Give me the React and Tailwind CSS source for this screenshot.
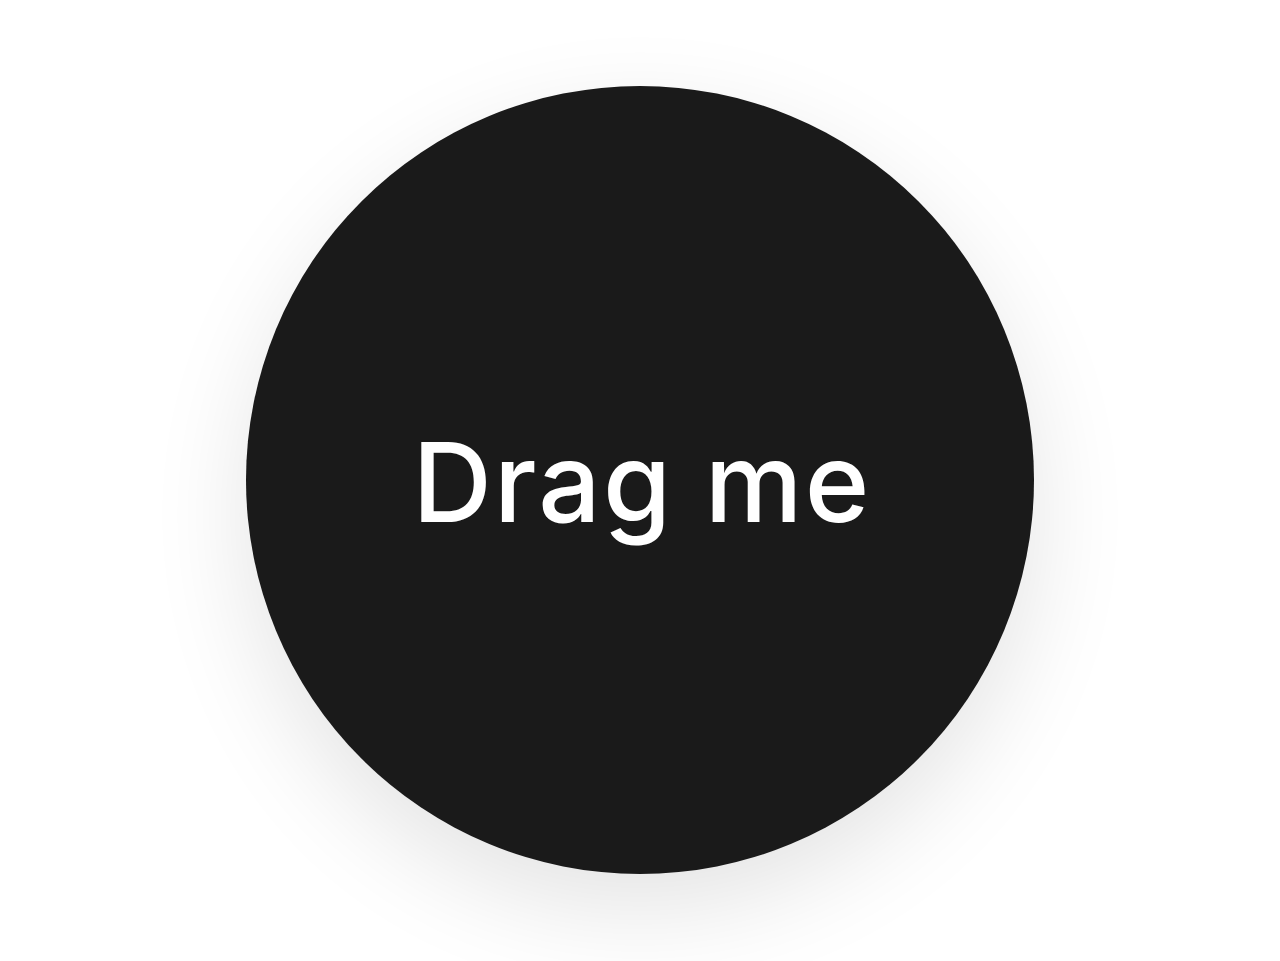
export default function App() {
  return (
    <div className="w-[1280px] h-[961px] bg-white flex items-center justify-center overflow-hidden">
      <div className="w-[788px] h-[788px] rounded-full bg-[#1a1a1a] flex items-center justify-center shadow-[0_35px_100px_rgba(0,0,0,0.11)] -mt-[1px]">
        <span className="text-white text-[110px] font-medium leading-none tracking-[0.02em] select-none mt-[4px] ml-[4px]" style={{ fontFamily: "Inter, 'Noto Sans', sans-serif" }}>
          Drag me
        </span>
      </div>
    </div>
  );
}
